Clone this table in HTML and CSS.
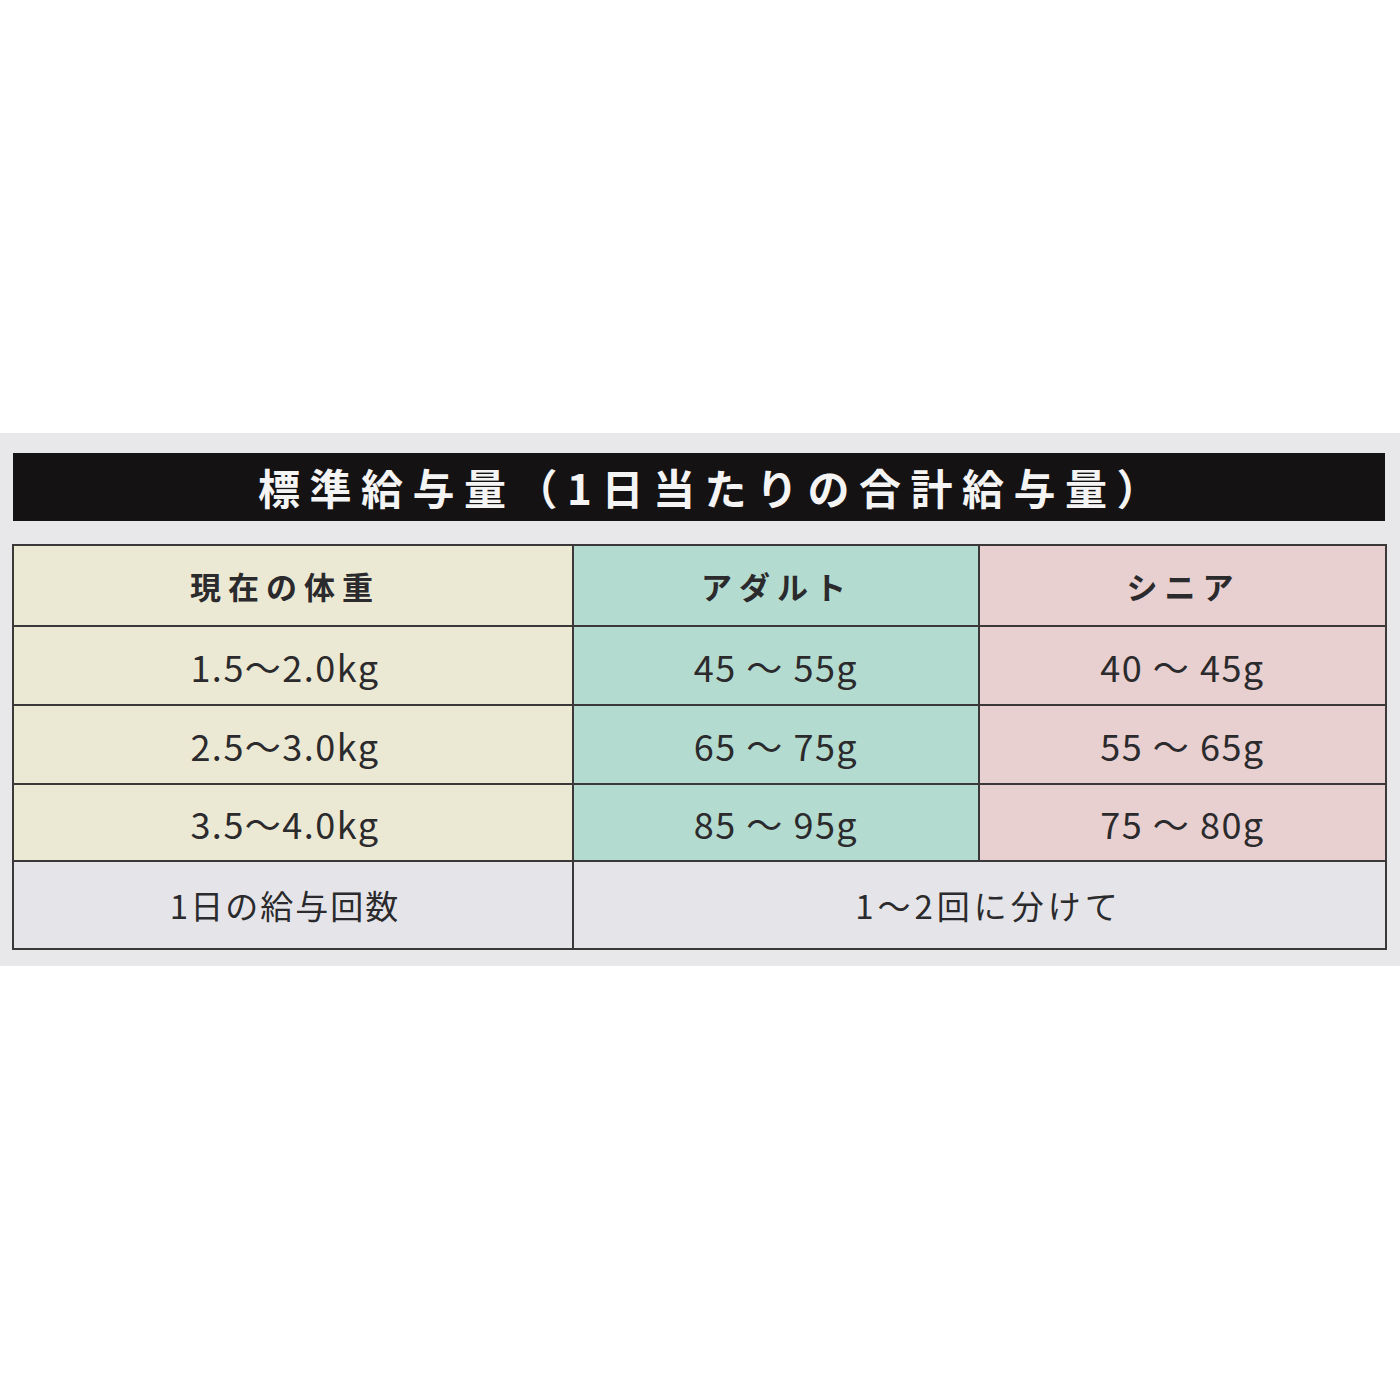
FILE: index.html
```html
<!DOCTYPE html>
<html lang="ja">
<head>
<meta charset="utf-8">
<link rel="stylesheet" href="styles.css">
</head>
<body>
<section class="band">
  <h1 class="title">標準給与量（1日当たりの合計給与量）</h1>
  <table class="feed">
    <colgroup>
      <col class="c1"><col class="c2"><col class="c3">
    </colgroup>
    <tr class="head">
      <th class="cream first">現在の体重</th>
      <th class="teal">アダルト</th>
      <th class="pink">シニア</th>
    </tr>
    <tr class="row">
      <td class="cream first">1.5〜2.0kg</td>
      <td class="teal">45 〜 55g</td>
      <td class="pink">40 〜 45g</td>
    </tr>
    <tr class="row">
      <td class="cream first">2.5〜3.0kg</td>
      <td class="teal">65 〜 75g</td>
      <td class="pink">55 〜 65g</td>
    </tr>
    <tr class="row last">
      <td class="cream first">3.5〜4.0kg</td>
      <td class="teal">85 〜 95g</td>
      <td class="pink">75 〜 80g</td>
    </tr>
    <tr class="foot">
      <td class="first">1日の給与回数</td>
      <td colspan="2">1〜2回に分けて</td>
    </tr>
  </table>
</section>
</body>
</html>
```
FILE: styles.css
```css
html, body {
  margin: 0;
  padding: 0;
  background: #ffffff;
}
body {
  padding-top: 433px;
  height: 1400px;
  box-sizing: border-box;
  font-family: "Noto Sans CJK JP", "Noto Sans", sans-serif;
  color: #2b2a2c;
}
.band {
  background: #e8e8ea;
  padding: 20px 15px 17px 12px;
  height: 533px;
  box-sizing: border-box;
}
.title {
  margin: 0 0 23px 1px;
  height: 68px;
  background: #141213;
  color: #f4f4f4;
  font-size: 42px;
  font-weight: 700;
  letter-spacing: 9.5px;
  line-height: 68px;
  text-align: center;
  padding-left: 28px;
}
.feed {
  width: 1373px;
  table-layout: fixed;
  border-collapse: collapse;
  border: 2px solid #2f2d33;
}
.c1 { width: 560px; }
.c2 { width: 406px; }
.c3 { width: 407px; }
.feed th, .feed td {
  border: 2px solid #3a3838;
  text-align: center;
  padding: 0;
}
.feed th {
  font-size: 31px;
  font-weight: 700;
  letter-spacing: 7px;
  height: 79px;
  padding-left: 2px;
}
.feed td {
  font-size: 36px;
  font-weight: 400;
  letter-spacing: 1.5px;
}
.feed .first {
  padding-left: 0;
  padding-right: 16px;
}
.row td { height: 77px; }
.row.last td { height: 75px; }
.foot td {
  height: 86px;
  background: #e5e5e9;
  font-size: 33px;
  letter-spacing: 2px;
}
.foot td + td {
  letter-spacing: 4px;
  padding-left: 18px;
}
.cream { background: #ebe9d4; }
.teal { background: #b4dbcf; }
.pink { background: #e8d0d0; }
```
